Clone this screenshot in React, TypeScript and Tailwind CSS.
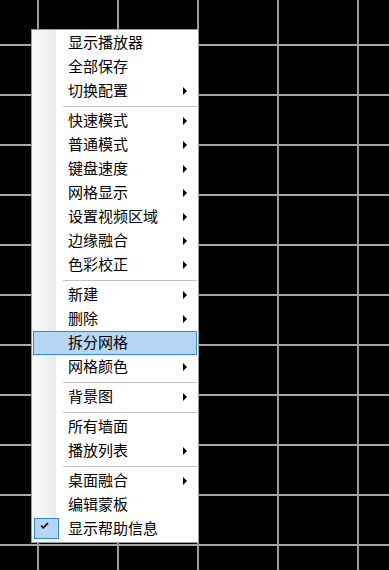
import React from 'react';

type Item =
  | { kind: 'sep' }
  | { kind: 'item'; label: string; sub?: boolean; active?: boolean; checked?: boolean };

const items: Item[] = [
  { kind: 'item', label: '显示播放器' },
  { kind: 'item', label: '全部保存' },
  { kind: 'item', label: '切换配置', sub: true },
  { kind: 'sep' },
  { kind: 'item', label: '快速模式', sub: true },
  { kind: 'item', label: '普通模式', sub: true },
  { kind: 'item', label: '键盘速度', sub: true },
  { kind: 'item', label: '网格显示', sub: true },
  { kind: 'item', label: '设置视频区域', sub: true },
  { kind: 'item', label: '边缘融合', sub: true },
  { kind: 'item', label: '色彩校正', sub: true },
  { kind: 'sep' },
  { kind: 'item', label: '新建', sub: true },
  { kind: 'item', label: '删除', sub: true },
  { kind: 'item', label: '拆分网格', active: true },
  { kind: 'item', label: '网格颜色', sub: true },
  { kind: 'sep' },
  { kind: 'item', label: '背景图', sub: true },
  { kind: 'sep' },
  { kind: 'item', label: '所有墙面' },
  { kind: 'item', label: '播放列表', sub: true },
  { kind: 'sep' },
  { kind: 'item', label: '桌面融合', sub: true },
  { kind: 'item', label: '编辑蒙板' },
  { kind: 'item', label: '显示帮助信息', checked: true },
];

function MenuRow({ item }: { item: Extract<Item, { kind: 'item' }> }) {
  return (
    <div
      className={
        'mx-[1px] flex h-[24px] items-center border ' +
        (item.active ? 'border-[#3089e0] bg-[#b7d6f4]' : 'border-transparent')
      }
    >
      <div className="flex h-full w-[34px] shrink-0 items-start">
        {item.checked && (
          <div className="h-[21px] w-[25px] border border-[#3089e0] bg-[#b7d6f4]">
            <svg width="9" height="7" viewBox="0 0 9 7" className="ml-[5px] mt-[3px]">
              <path d="M1 3.5 L3.3 5.8 L8 1" fill="none" stroke="#000" strokeWidth="1.6" />
            </svg>
          </div>
        )}
      </div>
      <span className="flex-1 pb-[3px] text-[15px] leading-none text-black">{item.label}</span>
      {item.sub && (
        <span className="mr-[9px] h-0 w-0 border-y-[4px] border-l-[4px] border-y-transparent border-l-black" />
      )}
    </div>
  );
}

export default function App() {
  return (
    <div
      className="relative h-[570px] w-[389px] overflow-hidden bg-black bg-[linear-gradient(to_right,#9c9c9c_2px,transparent_2px),linear-gradient(to_bottom,#a8a8a8_2px,transparent_2px)] bg-[size:80px_50px] bg-[position:37px_44px]"
      style={{ fontFamily: '"Noto Sans CJK SC", "Noto Sans", sans-serif' }}
    >
      <div className="absolute left-[31px] top-[29px] w-[168px] border border-[#9a9a9a] bg-[linear-gradient(to_right,#fcfcfc_0px,#eaeaea_24px,#ffffff_24px)] py-[1px]">
        {items.map((item, i) =>
          item.kind === 'sep' ? (
            <div key={i} className="flex h-[6px] items-center pl-[31px] pr-[1px]">
              <div className="h-px w-full bg-[#c3c3c3]" />
            </div>
          ) : (
            <MenuRow key={i} item={item} />
          )
        )}
      </div>
    </div>
  );
}
